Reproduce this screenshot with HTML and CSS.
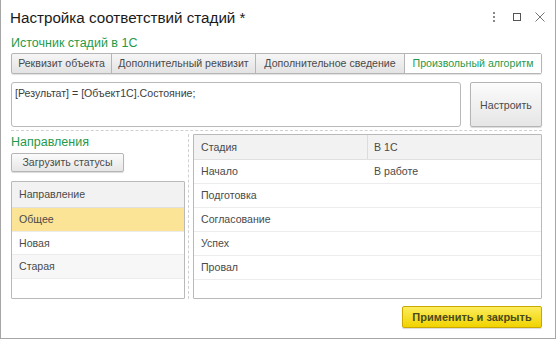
FILE: index.html
```
<!DOCTYPE html>
<html>
<head>
    <title>Настройка соответствий стадий</title>
    <link rel="stylesheet" href="styles.css">
</head>
<body>
    <div class="window">
        <div class="titlebar">
            <span class="title">Настройка соответствий стадий *</span>
            <div class="win-buttons">
                <svg width="10" height="10" viewBox="0 0 10 10"><rect x="4" y="0" width="2" height="2" fill="#888"/><rect x="4" y="4" width="2" height="2" fill="#888"/><rect x="4" y="8" width="2" height="2" fill="#888"/></svg>
                <svg width="10" height="10" viewBox="0 0 10 10"><rect x="1.5" y="1.5" width="7" height="7" fill="none" stroke="#555" stroke-width="1"/></svg>
                <svg width="10" height="10" viewBox="0 0 10 10"><path d="M0.5 0.5 L9.5 9.5 M9.5 0.5 L0.5 9.5" stroke="#777" stroke-width="1"/></svg>
            </div>
        </div>

        <div class="content">
            <div class="caption">Источник стадий в 1С</div>

            <!-- source switch -->
            <div class="tabs">
                <div class="tab">Реквизит объекта</div>
                <div class="tab">Дополнительный реквизит</div>
                <div class="tab">Дополнительное сведение</div>
                <div class="tab active">Произвольный алгоритм</div>
            </div>

            <div class="code-row">
                <div class="code">[Результат] = [Объект1С].Состояние;</div>
                <button class="btn btn-tall">Настроить</button>
            </div>

            <div class="split">
                <div class="left">
                    <div class="caption caption-small">Направления</div>
                    <button class="btn btn-load">Загрузить статусы</button>
                    <div class="grid grid-left">
                        <div class="grid-head"><div class="cell">Направление</div></div>
                        <div class="grid-row selected"><div class="cell">Общее</div></div>
                        <div class="grid-row"><div class="cell">Новая</div></div>
                        <div class="grid-row alt"><div class="cell">Старая</div></div>
                    </div>
                </div>
                <div class="vsep"></div>
                <div class="grid grid-right">
                    <div class="grid-head">
                        <div class="cell col1">Стадия</div>
                        <div class="cell col2">В 1С</div>
                    </div>
                    <div class="grid-row"><div class="cell col1">Начало</div><div class="cell col2">В работе</div></div>
                    <div class="grid-row"><div class="cell col1">Подготовка</div><div class="cell col2"></div></div>
                    <div class="grid-row"><div class="cell col1">Согласование</div><div class="cell col2"></div></div>
                    <div class="grid-row"><div class="cell col1">Успех</div><div class="cell col2"></div></div>
                    <div class="grid-row"><div class="cell col1">Провал</div><div class="cell col2"></div></div>
                </div>
            </div>

            <div class="footer">
                <button class="btn btn-default">Применить и закрыть</button>
            </div>
        </div>
    </div>
</body>
</html>
```

FILE: styles.css
```
* {
    box-sizing: border-box;
}
body {
    margin: 0;
    font-family: "Liberation Sans", Arial, sans-serif;
    background: #fff;
}
.window {
    width: 556px;
    height: 339px;
    border: 1px solid #a6a6a6;
    border-top: none;
    background: #fff;
    color: #4d4d4d;
    font-size: 10.6px;
}
.titlebar {
    height: 34px;
    display: flex;
    align-items: center;
    justify-content: space-between;
    padding: 0 10px 0 9px;
}
.title {
    font-size: 15.2px;
    color: #1a1a1a;
    margin-top: 1px;
}
.win-buttons {
    display: flex;
    gap: 13px;
    align-items: center;
}
.content {
    padding: 0 13px 0 10px;
}
.caption {
    color: #1f9a4c;
    font-size: 12.5px;
    height: 19px;
    line-height: 19px;
}
.caption-small {
    height: 17px;
    line-height: 17px;
}
.tabs {
    display: flex;
    height: 21px;
    border: 1px solid #b5b5b5;
    border-radius: 2px;
    background: linear-gradient(#f6f6f6, #e3e3e3);
    box-shadow: 0 1px 1px rgba(0,0,0,0.12);
    white-space: nowrap;
}
.tab {
    line-height: 19px;
    text-align: center;
    border-right: 1px solid #b5b5b5;
    color: #4a4a4a;
}
.tab:nth-child(1) { width: 100px; }
.tab:nth-child(2) { width: 144px; }
.tab:nth-child(3) { width: 149px; }
.tab.active {
    flex: 1;
    border-right: none;
    background: #fff;
    color: #1f9a4c;
}
.code-row {
    display: flex;
    gap: 9px;
    margin-top: 8px;
    height: 49px;
    padding-bottom: 3px;
    border-bottom: 1px dashed #d0d0d0;
}
.code {
    flex: 1;
    border: 1px solid #b9b9b9;
    border-radius: 3px;
    padding: 4px 3px;
    color: #3d3d3d;
}
.btn {
    font-family: "Liberation Sans", Arial, sans-serif;
    font-size: 10.6px;
    color: #4a4a4a;
    border: 1px solid #b5b5b5;
    border-radius: 2px;
    background: linear-gradient(#fbfbfb, #e6e6e6);
    box-shadow: 0 1px 1px rgba(0,0,0,0.15);
    padding: 0;
}
.btn-tall {
    width: 72px;
    height: 45px;
}
.split {
    display: flex;
    height: 165px;
    margin-top: 3px;
}
.left {
    width: 174px;
    display: flex;
    flex-direction: column;
}
.btn-load {
    width: 113px;
    height: 19px;
    margin-top: 2px;
}
.vsep {
    width: 0;
    border-left: 1px dashed #d0d0d0;
    margin: 0 4px 0 3px;
}
.grid {
    border: 1px solid #b9b9b9;
    border-radius: 1px;
    background: #fff;
}
.grid-left {
    margin-top: 9px;
    height: 119px;
}
.grid-right {
    flex: 1;
    height: 165px;
}
.grid-head {
    display: flex;
    height: 25px;
    background: #f2f2f2;
    border-bottom: 1px solid #e0e0e0;
}
.grid-left .grid-head {
    height: 26px;
}
.grid-row {
    display: flex;
    height: 24px;
    border-bottom: 1px solid #ececec;
}
.grid-left .grid-row:nth-child(3) {
    height: 23px;
}
.cell {
    line-height: 23px;
    padding: 0 7px;
    color: #4a4a4a;
}
.grid-head .cell {
    line-height: 24px;
}
.col1 {
    width: 174px;
}
.grid-head .col1 {
    border-right: 1px solid #dcdcdc;
}
.col2 {
    flex: 1;
    padding-left: 6px;
}
.selected {
    background: #fbe496;
}
.alt {
    background: #f7f7f7;
}
.footer {
    display: flex;
    justify-content: flex-end;
    margin-top: 7px;
}
.btn-default {
    width: 140px;
    height: 22px;
    font-size: 11px;
    font-weight: bold;
    color: #4a4a1a;
    border-color: #c9a800;
    background: linear-gradient(#fcec5c, #f1d300);
}
```
